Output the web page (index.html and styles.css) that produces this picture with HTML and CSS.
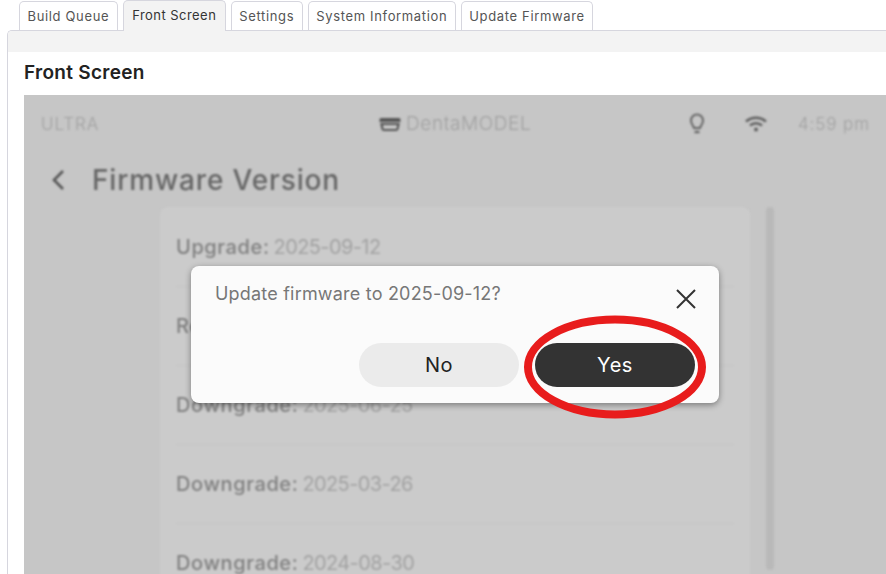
FILE: index.html
```html
<!DOCTYPE html>
<html lang="en">

<head>
	<meta charset="UTF-8">
	<title>Front Screen</title>
	<link rel="stylesheet" href="styles.css">
</head>

<body>
	<div class="tabs">
		<a class="tab">Build Queue</a>
		<a class="tab active">Front Screen</a>
		<a class="tab">Settings</a>
		<a class="tab">System Information</a>
		<a class="tab">Update Firmware</a>
	</div>

	<div class="panel">
		<div class="panel-head"></div>
		<div class="panel-body">
			<h2>Front Screen</h2>

			<div class="screen">
				<div class="screen-content">
					<div class="status-bar">
						<span class="brand">ULTRA</span>
						<span class="model">
							<svg width="24" height="16" viewBox="0 0 24 16">
								<path d="M3 2h18a1.500 1.500 0 0 1 1.500 1.500V6H1.500V3.500A1.500 1.500 0 0 1 3 2z" fill="#555" />
								<path d="M3.500 8h17l-1 5a1.500 1.500 0 0 1-1.500 1H6a1.500 1.500 0 0 1-1.500-1z" fill="none" stroke="#555" stroke-width="2.200" />
							</svg>
							DentaMODEL
						</span>
						<span class="status-right">
							<svg class="bulb" width="18" height="24" viewBox="0 0 18 24" fill="none" stroke="#666" stroke-width="2">
								<path d="M6 16c0-2-3-3.500-3-7.500a6 6 0 0 1 12 0c0 4-3 5.500-3 7.500z" />
								<path d="M6.500 20h5" stroke-width="2.400" />
							</svg>
							<svg class="wifi" width="24" height="18" viewBox="0 0 24 18" fill="none" stroke="#5f5f5f" stroke-width="2.600">
								<path d="M2 6.500c6-5 14-5 20 0" />
								<path d="M6 10.500c3.500-3 8.500-3 12 0" />
								<circle cx="12" cy="14.500" r="2" fill="#5f5f5f" stroke="none" />
							</svg>
							<span class="time">4:59 pm</span>
						</span>
					</div>

					<div class="title-bar">
						<svg width="16" height="24" viewBox="0 0 16 24" fill="none" stroke="#555" stroke-width="2.600">
							<path d="M12 3L3 12l9 9" />
						</svg>
						<span>Firmware Version</span>
					</div>

					<div class="list-area">
						<ul class="versions">
							<li><b>Upgrade:</b> 2025-09-12</li>
							<li><b>Reinstall:</b> 2025-09-10</li>
							<li><b>Downgrade:</b> 2025-06-25</li>
							<li><b>Downgrade:</b> 2025-03-26</li>
							<li><b>Downgrade:</b> 2024-08-30</li>
						</ul>
						<div class="scrollbar"></div>
					</div>
				</div>

				<div class="modal">
					<div class="modal-top">
						<p>Update firmware to 2025-09-12?</p>
						<svg width="22" height="22" viewBox="0 0 22 22" stroke="#333" stroke-width="2">
							<path d="M2 2l18 18M20 2L2 20" />
						</svg>
					</div>
					<div class="modal-buttons">
						<button class="btn-no">No</button>
						<button class="btn-yes">Yes</button>
					</div>
				</div>

				<svg class="ring" width="186" height="106" viewBox="0 0 186 106">
					<ellipse cx="93" cy="53" rx="87" ry="47.500" fill="none" stroke="#e81c1c" stroke-width="8" />
				</svg>
			</div>
		</div>
	</div>
</body>

</html>
```

FILE: styles.css
```css
body {
	margin: 0;
	height: 574px;
	overflow: hidden;
	background-color: #fff;
	font-family: Inter, "Open Sans", sans-serif;
}

.tabs {
	display: flex;
	align-items: flex-start;
	gap: 5px;
	height: 30px;
	margin-left: 19px;
}

.tab {
	box-sizing: border-box;
	height: 29px;
	margin-top: 1px;
	padding: 5px 7.500px 0;
	border: 1px solid #d6d6de;
	border-bottom: none;
	border-radius: 5px 5px 0 0;
	font-size: 13px;
	line-height: 18px;
	letter-spacing: 0.65px;
	color: #555;
	white-space: nowrap;
}

.tab.active {
	position: relative;
	height: 31px;
	margin-top: 0;
	padding: 5px 8.500px 0;
	letter-spacing: 0.45px;
	background-color: #f3f3f3;
	color: #333;
}

.panel {
	box-sizing: border-box;
	width: 879px;
	height: 544px;
	margin-left: 7px;
	border: 1px solid #d6d6de;
	border-right: none;
	border-bottom: none;
	border-radius: 5px 0 0 0;
	overflow: hidden;
}

.panel-head {
	height: 21px;
	background-color: #f3f3f3;
}

.panel-body {
	padding-left: 16px;
}

h2 {
	margin: 0;
	height: 43px;
	font-size: 19px;
	line-height: 41px;
	font-weight: 600;
	letter-spacing: 0.3px;
	color: #222;
}

.screen {
	position: relative;
	height: 479px;
	overflow: hidden;
	background-color: #c6c6c6;
}

.screen-content {
	filter: blur(1px);
}

.status-bar {
	display: flex;
	align-items: center;
	height: 57px;
	padding-left: 17px;
	font-size: 17px;
	letter-spacing: 0.9px;
	color: #a0a0a0;
	font-weight: 300;
}

.brand {
	width: 337px;
}

.model {
	display: flex;
	align-items: center;
	gap: 4px;
	width: 310px;
	font-size: 19px;
	letter-spacing: 0.6px;
}

.status-right {
	display: flex;
	align-items: center;
}

.wifi {
	margin-left: 38px;
}

.time {
	margin-left: 30px;
	white-space: nowrap;
}

.title-bar {
	box-sizing: border-box;
	display: flex;
	align-items: center;
	gap: 25px;
	height: 55px;
	padding-left: 27px;
	font-size: 28px;
	font-weight: 500;
	letter-spacing: 0.85px;
	color: #666;
}

.list-area {
	display: flex;
	gap: 16px;
	padding-left: 136px;
}

.versions {
	box-sizing: border-box;
	width: 590px;
	height: 380px;
	margin: 0;
	padding: 1px 16px 0;
	list-style: none;
	background-color: #cbcbcb;
	border-radius: 8px;
	font-size: 20px;
	letter-spacing: -0.6px;
	color: #a2a2a2;
}

.versions li {
	box-sizing: border-box;
	height: 79px;
	padding-top: 29px;
	line-height: 20px;
	border-bottom: 1px solid #c4c4c4;
}

.versions b {
	margin-right: -1px;
	font-weight: 500;
	letter-spacing: 0.6px;
	color: #808080;
}

.scrollbar {
	width: 8px;
	height: 363px;
	border-radius: 4px;
	background-color: #b9b9b9;
}

.modal {
	position: absolute;
	left: 167px;
	top: 171px;
	box-sizing: border-box;
	width: 528px;
	height: 137px;
	padding: 16px 24px;
	background-color: #fbfbfb;
	border-radius: 8px;
	box-shadow: 0 2px 6px rgba(0, 0, 0, 0.4);
}

.modal-top {
	display: flex;
	justify-content: space-between;
	height: 61px;
}

.modal-top p {
	margin: 0;
	font-size: 18px;
	line-height: 24px;
	letter-spacing: 0.2px;
	color: #777;
}

.modal-top svg {
	margin-top: 6px;
	margin-right: -2px;
}

.modal-buttons {
	display: flex;
	justify-content: flex-end;
	gap: 16px;
}

.modal-buttons button {
	width: 160px;
	height: 44px;
	border: none;
	border-radius: 22px;
	font-family: inherit;
	font-size: 20px;
	letter-spacing: 0.5px;
}

.btn-no {
	background-color: #ebebeb;
	color: #222;
}

.btn-yes {
	background-color: #333;
	color: #fff;
}

.ring {
	position: absolute;
	left: 498px;
	top: 219px;
}
```
